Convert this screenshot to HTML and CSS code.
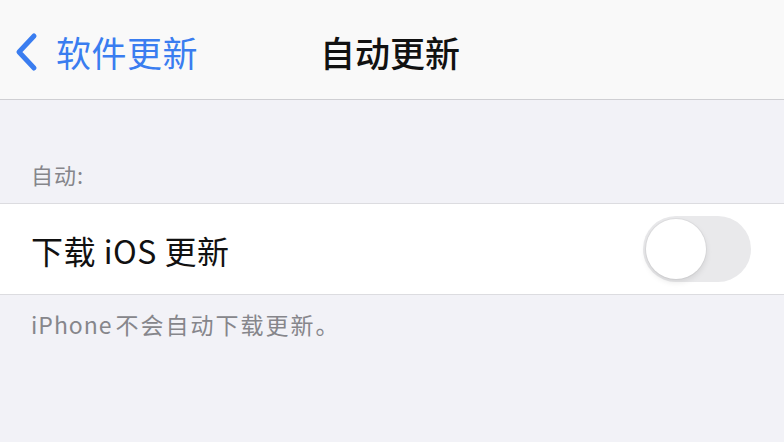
FILE: index.html
```html
<!DOCTYPE html>
<html lang="zh">
<head>
<meta charset="utf-8">
<link rel="stylesheet" href="styles.css">
</head>
<body>
<header class="nav">
  <div class="back">
    <svg class="chev" width="26" height="40" viewBox="0 0 26 40"><path d="M21 4 L6 20 L21 36" fill="none" stroke="#3a7df0" stroke-width="5" stroke-linecap="round" stroke-linejoin="round"/></svg>
    <span class="back-label">软件更新</span>
  </div>
  <div class="title">自动更新</div>
</header>
<main>
  <div class="section-header">自动:</div>
  <div class="row">
    <span class="row-label">下载 iOS 更新</span>
    <div class="toggle"><div class="knob"></div></div>
  </div>
  <div class="footer"><span class="latin">iPhone</span>不会自动下载更新。</div>
</main>
</body>
</html>
```
FILE: styles.css
```css
* { box-sizing: border-box; }
html, body { margin: 0; padding: 0; }
body {
  width: 784px; height: 442px; overflow: hidden;
  background: #f2f2f7;
  font-family: "Noto Sans CJK SC", "Noto Sans", sans-serif;
}
.nav {
  position: relative;
  height: 100px;
  background: #f9f9f9;
  border-bottom: 1px solid #cfcfd3;
  display: flex;
  align-items: center;
  justify-content: center;
}
.back {
  position: absolute;
  left: 13px; top: 0; bottom: 0;
  display: flex; align-items: center;
  gap: 17px;
}
.chev { display: block; margin-top: 4px; }
.back-label { color: #3a7df0; font-size: 35px; line-height: 1; margin-top: 4px; letter-spacing: 0.5px; }
.title { font-size: 35px; color: #111; font-weight: 500; line-height: 1; margin-top: 4px; margin-left: -4px; }
.section-header {
  height: 103px;
  font-size: 22px; color: #86868b; line-height: 1;
  padding: 63px 0 0 31px;
  letter-spacing: 1px;
}
.row {
  height: 92px;
  background: #fff;
  border-top: 1px solid #dcdce0;
  border-bottom: 1px solid #dcdce0;
  display: flex; align-items: center; justify-content: space-between;
  padding: 0 33px 0 31px;
}
.row-label { font-size: 32px; color: #111; line-height: 1; letter-spacing: 0.5px; margin-top: 2px; }
.toggle {
  width: 108px; height: 66px; border-radius: 33px;
  background: #e9e9eb;
  padding: 3px;
}
.knob {
  width: 60px; height: 60px; border-radius: 50%;
  background: #fff;
  box-shadow: 0 3px 6px rgba(0,0,0,0.1), 0 0 0 1px rgba(0,0,0,0.04);
}
.footer {
  padding: 16px 0 0 31px;
  font-size: 23px; color: #86868b; line-height: 1.2;
  letter-spacing: 2px;
}
.latin { letter-spacing: 1px; margin-right: 3px; }
```
